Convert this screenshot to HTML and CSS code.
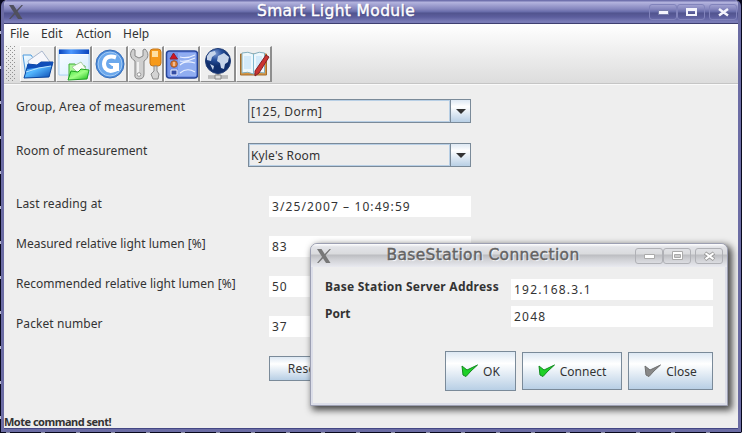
FILE: index.html
```html
<!DOCTYPE html>
<html lang="en">
<head>
<meta charset="utf-8">
<title>Smart Light Module</title>
<link rel="stylesheet" href="styles.css">
</head>
<body>
<div class="window">
  <header class="titlebar">
    <svg class="xlogo" width="14" height="14" viewBox="0 0 14 14"><path d="M0 0h4.5l9 14H9z" fill="#50505e"/><path d="M12.5 0H14L8 7 6.8 6zM5.8 7l1 1.500L1.500 14H0z" fill="#50505e"/></svg>
    <h1 class="title">Smart Light Module</h1>
    <div class="controls">
      <span class="control"><svg width="26" height="16"><path d="M8.500 6.500h10v4h-10z" fill="#f4f4fc" stroke="#777caa"/></svg></span><span class="control"><svg width="26" height="16"><path d="M8 4h11v8H8zM10 7v3h7V7z" fill="#f4f4fc" fill-rule="evenodd"/></svg></span><span class="control last"><svg width="26" height="16"><path d="M9 5l9 6.500M18 5l-9 6.500" stroke="#f4f4fc" stroke-width="2.500"/></svg></span>
    </div>
  </header>
  <div class="bars">
    <nav class="menu"><span class="m-file">File</span><span class="m-edit">Edit</span><span class="m-action">Action</span><span class="m-help">Help</span></nav>
    <div class="toolbar">
      <span class="grip"></span>
      <span class="tool"><svg width="34" height="34" viewBox="0 0 34 34">
        <defs>
          <linearGradient id="blue" x1="0" y1="0" x2="1" y2="1"><stop stop-color="#0b56c6"/><stop offset=".45" stop-color="#55b8ff"/><stop offset="1" stop-color="#0745ae"/></linearGradient>
          <linearGradient id="pale" x1="0" y1="0" x2="1" y2="1"><stop stop-color="#f8fdff"/><stop offset="1" stop-color="#8cceff"/></linearGradient>
          <linearGradient id="lime" x1="0" y1="0" x2="1" y2="1"><stop stop-color="#3be13b"/><stop offset=".5" stop-color="#a0ff85"/><stop offset="1" stop-color="#16bb17"/></linearGradient>
          <linearGradient id="head" x1="0" x2="1"><stop stop-color="#0a45bd"/><stop offset=".4" stop-color="#4b98ff"/><stop offset="1" stop-color="#0a45bd"/></linearGradient>
        </defs>
        <path d="M2 8h8l2 3 13 1v17L5 30z" fill="url(#pale)" stroke="#4b9adf"/><path d="M7 14l14-10 8 11-9 6H9z" fill="#f7f7fb" stroke="#a9b7ce"/><path d="M7 17l9 1 4-3 12 0-4 15-25 1z" fill="url(#blue)" stroke="#0a449c"/><path d="M7 17l9 1 4-3 12 0-1 4-25 3z" fill="#0f4db8"/><path d="M5 25q13-5 25-6" fill="none" stroke="#b9e4ff"/>
      </svg></span><span class="tool"><svg width="34" height="34" viewBox="0 0 34 34"><path d="M2 3h30v25H2z" fill="#f6fbff" stroke="#9fcdf5"/><path d="M2 2.500h30V7H2z" fill="url(#head)"/><path d="M3 8h28v19H3z" fill="url(#pale)" opacity=".3"/><path d="M12 17h6l2 2h8v12H12z" fill="#a9f696" stroke="#3fac37"/><path d="M15 20l9-5 5 7-7 5z" fill="#fafff7" stroke="#a9cda2"/><path d="M14 24l7 1 3-3 8 1-2 9-19 1z" fill="url(#lime)" stroke="#20a423"/></svg></span><span class="tool"><svg width="34" height="34" viewBox="0 0 34 34"><circle cx="17" cy="17" r="14" fill="#4b8ddd" stroke="#3a70ba"/><circle cx="17" cy="17" r="12" fill="#6ba8ec" stroke="#b6d6f6" stroke-width=".8"/><path d="M23 10.500Q16 8 12.500 12 9.500 17 12.500 21.500 16 25.500 22 23V17.500" fill="none" stroke="#fff" stroke-width="4"/><path d="M15.500 16H26v8h-3.500v-5H19z" fill="#fff"/></svg></span><span class="tool"><svg width="34" height="34" viewBox="0 0 34 34"><path d="M4 2C0 6 1 11 6 14v13q-1 5 4 5t5-5V14c5-3 5-8 1-12l-2 1v6l-4 2-4-2V3z" fill="#cfcfcf" stroke="#858585"/><path d="M9 15v11" stroke="#f1f1f1" stroke-width="2"/><circle cx="10" cy="27.500" r="1.800" fill="#fff" stroke="#999"/><rect x="21" y="2" width="11" height="17" rx="3" fill="#f69a1b" stroke="#c6761b"/><path d="M23 4h6v6h-6z" fill="#ffe0a3"/><path d="M25 19h3v5l2 3-1 5h-5l-2-5 3-3z" fill="#d3d3d3" stroke="#8b8b8b"/></svg></span><span class="tool"><svg width="34" height="34" viewBox="0 0 34 34"><rect x="1.500" y="4" width="31" height="27" rx="3" fill="#7694e8" stroke="#26459a" stroke-width="1.500"/><path d="M13 6h18v23H13z" fill="#98b4f3" opacity=".8"/><path d="M8.500 6l4 6H5z" fill="#d51420" stroke="#8e2235"/><circle cx="9" cy="17" r="3.300" fill="#e78233" stroke="#9c552d"/><path d="M9 15v4M6 23h6v5H6z" fill="#334da5" stroke="#eef3ff"/><path d="M15 10q7 2 15-2M15 18q5-5 15-2M15 26q7-6 15-1M15 14q7 1 15-3" fill="none" stroke="#e8efff" stroke-width="1.100"/></svg></span><span class="tool"><svg width="34" height="34" viewBox="0 0 34 34"><defs><radialGradient id="globe" cx=".4" cy=".2"><stop stop-color="#7f9bd1"/><stop offset=".5" stop-color="#29519d"/><stop offset="1" stop-color="#102e6c"/></radialGradient></defs><path d="M17 25v4M7 30h20" stroke="#969696" stroke-width="3"/><path d="M7 30h20" stroke="#e1e1e1"/><path d="M14 28h6v4h-6z" fill="#ddd" stroke="#888"/><circle cx="17" cy="14" r="12.500" fill="url(#globe)" stroke="#203c75"/><path d="M6 9l3-4 5-1 1 3-4 3-1 4-4-1zM17 9l6-3 5 4-1 5-3 2-1 5-3-1-1-5-3-2zM9 17l4 2-1 4z" fill="#c6d4ea"/></svg></span><span class="tool"><svg width="34" height="34" viewBox="0 0 34 34"><path d="M3.500 7h26v21h-26z" fill="#d8953f" stroke="#a46d2c"/><path d="M5 6q6-2 11.500 1 6-3 11-1v20q-6-2-11 1-6-3-11.500-1z" fill="#edf7fc" stroke="#82adbd"/><path d="M7 9h7v13H7zM19 9h6v13h-6z" fill="#d3eafa"/><path d="M16.500 7v20" stroke="#82b8cf"/><path d="M29 8l3 2-10 16-4 3v-5z" fill="#cb3430" stroke="#821f28"/></svg></span>
    </div>
  </div>
  <main class="content">
    <div class="row combo-row"><label class="l-group">Group, Area of measurement</label><div class="combo"><span class="combo-text c-dorm">[125, Dorm]</span><span class="arrow"><i></i></span></div></div>
    <div class="row combo-row"><label class="l-room">Room of measurement</label><div class="combo"><span class="combo-text c-room">Kyle's Room</span><span class="arrow"><i></i></span></div></div>
    <div class="row value-row first"><label class="l-last">Last reading at</label><div class="field date">3/25/2007 – 10:49:59</div></div>
    <div class="row value-row"><label class="l-meas">Measured relative light lumen [%]</label><div class="field">83</div></div>
    <div class="row value-row"><label class="l-rec">Recommended relative light lumen [%]</label><div class="field">50</div></div>
    <div class="row value-row"><label class="l-packet">Packet number</label><div class="field">37</div></div>
    <button class="button reset">Reset</button>
  </main>
  <footer class="status">Mote command sent!</footer>
</div>
<section class="dialog">
  <header class="dialog-title">
    <svg class="xlogo" width="14" height="14" viewBox="0 0 14 14"><path d="M0 0h4.500l9 14H9z" fill="#777"/><path d="M12.500 0H14L8 7 6.800 6zM5.800 7l1 1.500L1.500 14H0z" fill="#777"/></svg>
    <h2 class="title">BaseStation Connection</h2>
    <div class="controls"><span class="control"><svg width="26" height="16"><path d="M8.500 6.500h10v4h-10z" fill="#fff" stroke="#aaa"/></svg></span><span class="control"><svg width="26" height="16"><path d="M8.500 3.500h10v8h-10z" fill="#fff" stroke="#aaa"/><path d="M10.500 6.500h6v3h-6z" fill="#ccc" stroke="#aaa"/></svg></span><span class="control last"><svg width="26" height="16"><path d="M9 5l9 6.500M18 5l-9 6.500" stroke="#999" stroke-width="4"/><path d="M9.500 5.300l8 5.800M17.500 5.300l-8 5.800" stroke="#fff" stroke-width="2"/></svg></span></div>
  </header>
  <div class="dialog-body">
    <div class="dialog-row"><label class="l-address">Base Station Server Address</label><div class="field ip">192.168.3.1</div></div>
    <div class="dialog-row"><label class="l-port">Port</label><div class="field port">2048</div></div>
    <div class="actions">
      <button class="button ok"><svg width="17" height="14" viewBox="0 0 17 14"><path d="M1 2l5 4L16.500 1 10 7 5 12.500 2 11z" fill="#1ed127" stroke="#138b20"/></svg><span>OK</span></button>
      <button class="button connect"><svg width="17" height="14" viewBox="0 0 17 14"><path d="M1 2l5 4L16.500 1 10 7 5 12.500 2 11z" fill="#1ed127" stroke="#138b20"/></svg><span>Connect</span></button>
      <button class="button close"><svg width="17" height="14" viewBox="0 0 17 14"><path d="M1 2l5 4L16.500 1 10 7 5 12.500 2 11z" fill="#888" stroke="#6f6f6f"/></svg><span>Close</span></button>
    </div>
  </div>
</section>
</body>
</html>
```
FILE: styles.css
```css
* { box-sizing: border-box; }
body {
  margin: 0; width: 742px; height: 433px; overflow: hidden; position: relative;
  padding-left: 1px;
  background:
    repeating-linear-gradient(#b9bad0 0 3px, transparent 3px 35px) 0 31px / 1px 100% no-repeat,
    repeating-linear-gradient(90deg, #8c8da4 0 4px, transparent 4px 35px) 6px 432px / 100% 1px no-repeat,
    #08081d;
  font: 12px/16px "Noto Sans", sans-serif; color: #333;
}
.window {
  width: 740px; height: 432px; display: flex; flex-direction: column;
  border: 3px solid #6b6ca4; border-top: 0; border-radius: 6px 6px 0 0;
  background: #eee; overflow: hidden;
}
.titlebar {
  height: 24px; flex: none; display: flex; align-items: center; margin: 0 -3px;
  padding: 0 4px 0 8px; border-bottom: 1px solid #3e3f70;
  background: linear-gradient(#7071ad 0 1px, #b5b5df 2px, #8586be 9px, #666aa8 12px, #51548e 13px, #5c5e9d 17px, #7c7eb9 22px, #7779b3 23px);
}
.title {
  flex: 1; margin: 0; text-align: center; color: #fff; text-shadow: 1px 1px 1px #51548e;
  font: 400 15.5px/20px "DejaVu Sans", sans-serif; letter-spacing: .35px; -webkit-text-stroke: .4px; white-space: nowrap;
}
.titlebar .title { position: relative; top: -1px; }
.controls { display: flex; }
.control { width: 28px; height: 16px; border: 1px solid #8183bb; border-radius: 3px; display: flex; justify-content: center; align-items: center; }
.control svg { flex: none; }
.control.last { margin-left: 4px; }
.bars { height: 61px; flex: none; border-bottom: 1px solid #fafafa; box-shadow: inset 0 -1px #c5c5c5; background: linear-gradient(#fff, #dcdcdc); }
.menu { display: flex; height: 21px; padding: 2px 0 0 6px; }
.m-file { width: 31px; }
.m-edit { width: 35px; }
.m-action { width: 47px; }
.toolbar { display: flex; align-items: flex-start; padding: 1px 0 0 2px; }
.grip {
  width: 10px; height: 36px; margin-right: 4px;
  background: radial-gradient(circle at .5px .5px, #909090 .6px, transparent .7px) 0 0 / 4px 4px,
    radial-gradient(circle at 2.5px 2.5px, #909090 .6px, transparent .7px) 0 0 / 4px 4px;
}
.tool { width: 36px; height: 36px; border: 1px solid #fff; border-right: 2px solid #8e8e8e; border-bottom-color: #8e8e8e; background: #eee; overflow: hidden; }
.tool svg { display: block; }
.content { flex: 1; padding: 14px 0 0 12px; white-space: nowrap; border: solid #444785; border-width: 0 1px; margin: 0 -1px; }
.row { display: flex; align-items: flex-start; }
.combo-row { height: 44px; }
.combo-row label { width: 232px; }
.l-group { letter-spacing: .18px; }
.l-room, .l-packet { letter-spacing: .08px; }
.l-last { letter-spacing: .14px; }
.l-rec { letter-spacing: .03px; }
.combo { width: 223px; height: 24px; border: 1px solid #7a8a99; display: flex; }
.combo-text { flex: 1; border: 1px solid #b8cfe5; padding: 1px 1px; line-height: 19px; }
.c-dorm { letter-spacing: .4px; }
.c-room { letter-spacing: .15px; }
.arrow { width: 20px; border-left: 1px solid #7a8a99; background: linear-gradient(#dde8f3, #fff 30%, #b8cfe5); display: flex; align-items: center; justify-content: center; }
.arrow i { border: 5px solid transparent; border-top: 5px solid #333; border-bottom: 0; }
.value-row { height: 40px; }
.value-row label { width: 253px; }
.value-row.first { margin-top: 9px; }
.field { width: 202px; height: 21px; background: #fff; padding-left: 3px; line-height: 21px; letter-spacing: 1px; }
.date { letter-spacing: 1.1px; }
.ip { letter-spacing: 1.2px; }
.port { letter-spacing: 1.2px; }
.l-address { letter-spacing: .25px; }
.button { font: inherit; color: #333; border: 1px solid #7a8a99; padding: 0; background: linear-gradient(#dde8f3, #fff 30%, #b8cfe5); display: flex; align-items: center; justify-content: center; gap: 5px; }
.button span { position: relative; top: 1px; }
.reset { width: 70px; height: 25px; margin-left: 253px; letter-spacing: .3px; }
.status { font-weight: 700; font-size: 11px; height: 15px; line-height: 15px; letter-spacing: -.5px; border-bottom: 1px solid #444785; }
.dialog { position: absolute; left: 310px; top: 243px; width: 418px; height: 163px; border: 1px solid #9c9fb2; border-radius: 7px 7px 0 0; background: #eee; box-shadow: inset 2px 0 #dcdee9, inset -2px 0 #dcdee9, inset 0 -2px #dcdee9, 3px 3px 7px 1px #444; }
.dialog-title { height: 23px; display: flex; align-items: center; padding: 0 4px 0 6px; border-radius: 6px 6px 0 0; background: linear-gradient(#fff, #e2e3e8 3px, #dadbdd 10px, #bcbdc1 11px, #cecfd3 15px, #e9eaf0); }
.dialog-title .title { color: #636363; text-shadow: 1px 1px 1px #fff; position: relative; top: -1px; }
.dialog-title .control { border-color: #b0b1b6; }
.dialog-body { padding: 12px 14px 0; }
.dialog-row { height: 27px; display: flex; justify-content: space-between; font-weight: 700; }
.dialog-row .field { font-weight: 400; }
.actions { display: flex; justify-content: flex-end; align-items: center; gap: 6px; height: 40px; margin-top: 18px; }
.ok { width: 71px; height: 40px; }
.connect { width: 100px; height: 38px; }
.close { width: 85px; height: 38px; }
```
